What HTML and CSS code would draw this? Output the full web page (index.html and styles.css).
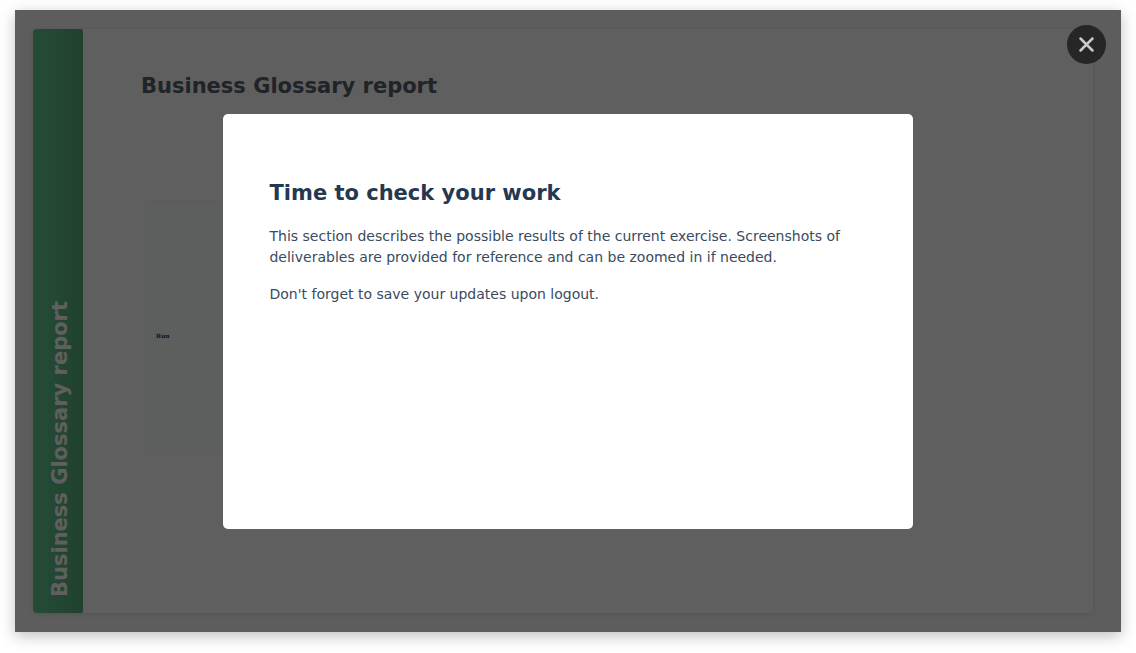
FILE: index.html
```html
<!DOCTYPE html>
<html lang="en">
<head>
<meta charset="utf-8">
<title>Business Glossary report</title>
<link rel="stylesheet" href="styles.css">
</head>
<body>
<main class="stage">
  <section class="card">
    <div class="spine"><span class="spine-label">Business Glossary report</span></div>
    <div class="content">
      <h1 class="title title-muted">Business Glossary report</h1>
      <div class="figure"><span class="figure-label">Run</span></div>
    </div>
  </section>
  <div class="overlay">
    <div class="dialog" role="dialog" aria-modal="true" aria-labelledby="dialog-title">
      <h2 class="title" id="dialog-title">Time to check your work</h2>
      <p class="text">This section describes the possible results of the current exercise. Screenshots of deliverables are provided for reference and can be zoomed in if needed.</p>
      <p class="text">Don't forget to save your updates upon logout.</p>
    </div>
    <button class="close" type="button" aria-label="Close">
      <svg width="17" height="17" viewBox="0 0 17 17" fill="none" stroke="currentColor" stroke-width="2.5" stroke-linecap="round" aria-hidden="true"><path d="M2.5 2.5l12 12M14.5 2.5l-12 12"/></svg>
    </button>
  </div>
</main>
</body>
</html>
```
FILE: styles.css
```css
* {
  box-sizing: border-box;
}

body {
  margin: 0;
  min-height: 100vh;
  padding: 10px 15px 21px;
  display: flex;
  background: #fff;
  color: #263850;
  font-family: Verdana, "DejaVu Sans", sans-serif;
}

.stage {
  position: relative;
  flex: 1;
  display: flex;
  padding: 19px 28px 19px 18px;
  background: #fafafa;
  box-shadow: 0 4px 14px rgba(0, 0, 0, 0.25);
}

.card {
  flex: 1;
  display: flex;
  border-radius: 4px;
  background: #fff;
  box-shadow: 0 1px 6px rgba(0, 0, 0, 0.12);
}

.spine {
  width: 50px;
  padding: 16px 10px;
  writing-mode: vertical-rl;
  transform: rotate(180deg);
  border-radius: 2px 4px 4px 2px;
  background: linear-gradient(270deg, #64cb92, #57b07e);
}

.spine-label {
  display: block;
  margin-right: 5px;
  color: #fff;
  font-size: 21px;
  line-height: 24px;
  font-weight: bold;
  white-space: nowrap;
}

.content {
  flex: 1;
  padding: 44px 58px;
}

.title {
  margin: 0;
  font-size: 21px;
  line-height: 26px;
}

.title-muted {
  color: #54606e;
}

.figure {
  margin: 101px 0 0 4px;
  height: 255px;
  padding: 0 11px;
  display: flex;
  align-items: center;
  width: 50%;
  border-top: 1px solid #f3f3f3;
  background: #f9fdfb;
}

.figure-label {
  margin-top: 16px;
  color: #333;
  font: bold 6px/8px "DejaVu Serif", serif;
}

.overlay {
  position: absolute;
  inset: 0;
  display: flex;
  align-items: center;
  justify-content: center;
  background: rgba(0, 0, 0, 0.627);
}

.dialog {
  width: 62.3%;
  min-height: 415px;
  padding: 66px 46px;
  border-radius: 5px;
  background: #fff;
}

.text {
  margin: 16px 0 0;
  color: #3a4a5f;
  font-size: 14px;
  line-height: 21px;
}

.title + .text {
  margin-top: 20px;
}

.close {
  position: absolute;
  top: 15px;
  right: 15px;
  width: 39px;
  height: 39px;
  padding: 0;
  display: flex;
  align-items: center;
  justify-content: center;
  border: 0;
  border-radius: 50%;
  background: #262626;
  color: #cbcbcb;
}
```
